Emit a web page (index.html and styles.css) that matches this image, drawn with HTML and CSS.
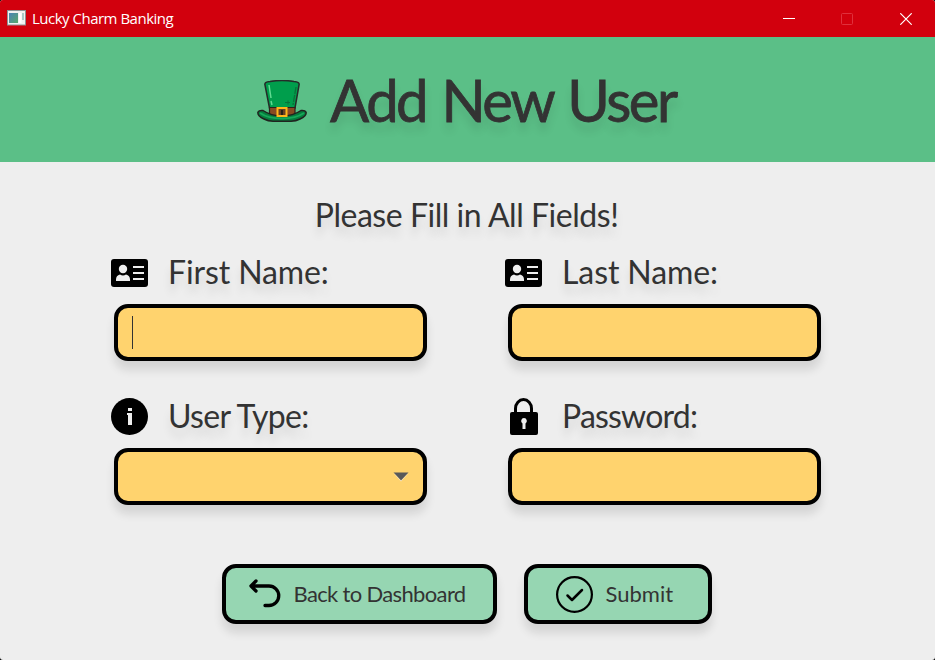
FILE: index.html
```html
<!DOCTYPE html>
<html lang="en">
<head>
<meta charset="utf-8">
<title>Lucky Charm Banking</title>
<link rel="stylesheet" href="styles.css">
</head>
<body>
<div class="window">
  <div class="titlebar">
    <svg class="app-icon" width="19" height="16" viewBox="0 0 19 16">
      <defs><linearGradient id="pane" x1="0" y1="0" x2="1" y2="1"><stop offset="0" stop-color="#4a83b8"/><stop offset="1" stop-color="#58a869"/></linearGradient></defs>
      <rect x=".5" y=".5" width="18" height="14.5" fill="#f1f1f1" stroke="#8c9395"/>
      <rect x="2" y="3" width="9" height="10" fill="url(#pane)"/>
      <rect x="12" y="3" width="2.5" height="10" fill="#fff"/>
      <rect x="15" y="3" width="2" height="7" fill="#a9c9c7"/>
    </svg>
    <span class="app-name">Lucky Charm Banking</span>
    <div class="controls">
      <svg width="12" height="12" viewBox="0 0 12 12"><path d="M0 5.5h12" stroke="#fff"/></svg>
      <svg width="12" height="12" viewBox="0 0 12 12"><rect x=".5" y=".5" width="11" height="11" rx="1" fill="none" stroke="#e0303c"/></svg>
      <svg width="12" height="12" viewBox="0 0 12 12"><path d="M.3.3l11.4 11.4M11.7.3L.3 11.7" stroke="#fff" stroke-width="1.2"/></svg>
    </div>
  </div>
  <header class="banner">
    <svg class="hat" width="50" height="42" viewBox="0 0 50 42">
      <path d="M12.500 28L8 5Q7 2 13 1.500Q25-.5 37 1.500Q43 2 42 5L38 28z" fill="#009e4c" stroke="#252b28" stroke-width="1.500"/>
      <path d="M12 5l2 13M14 21l1 4" stroke="#5fdb91" stroke-width="1.500" fill="none"/>
      <path d="M39 7l-3 18" stroke="#087239" stroke-width="1.300" stroke-dasharray="7 1" fill="none"/>
      <path d="M28 22.500h5M31 20.500v4" stroke="#087239" stroke-width="1" fill="none"/>
      <path d="M12.500 27.500H38V37H12.500z" fill="#874a22" stroke="#2d211b" stroke-width="1.200"/>
      <path d="M1 32Q2 30 6 30.500Q14 36 25 36T44 30.500Q48 30 49 32Q50 36 43 39Q39 41.200 34 41.200H16Q11 41.200 7 39Q0 36 1 32z" fill="#057d3d" stroke="#20231f" stroke-width="1.500"/>
      <path d="M3 33Q11 38.500 25 38.500T47 33" fill="none" stroke="#17a859" stroke-width="1.800"/>
      <path d="M20.500 28h9v8h-9z" fill="#674022" stroke="#ffb51b" stroke-width="2"/>
      <path d="M25 30v5" stroke="#201b18" stroke-width="1.800"/>
    </svg>
    <h1 class="title">Add New User</h1>
  </header>
  <main class="content">
    <h2 class="subtitle">Please Fill in All Fields!</h2>
    <form class="fields">
      <div class="field">
        <div class="label-row">
          <svg class="icon" width="37" height="28" viewBox="0 0 37 28"><rect width="37" height="28" rx="3"/><g fill="#eee"><circle cx="12" cy="10" r="4.200"/><path d="M5 22v-1.500q0-4 4-5 3 2 6 0 4 1 4 5V22zM22 7h11v2H22zM22 13h11v2H22zM22 19h11v2H22z"/></g></svg>
          <label class="label first">First Name:</label>
        </div>
        <div class="input"><span class="caret"></span></div>
      </div>
      <div class="field">
        <div class="label-row">
          <svg class="icon" width="37" height="28" viewBox="0 0 37 28"><rect width="37" height="28" rx="3"/><g fill="#eee"><circle cx="12" cy="10" r="4.200"/><path d="M5 22v-1.500q0-4 4-5 3 2 6 0 4 1 4 5V22zM22 7h11v2H22zM22 13h11v2H22zM22 19h11v2H22z"/></g></svg>
          <label class="label last">Last Name:</label>
        </div>
        <div class="input"></div>
      </div>
      <div class="field">
        <div class="label-row">
          <svg class="icon" width="37" height="37" viewBox="0 0 37 37"><circle cx="18.500" cy="18.500" r="18.500"/><path d="M17 10h4v3h-4zM16 15h5v12h-4V17h-1z" fill="#eee"/></svg>
          <label class="label type">User Type:</label>
        </div>
        <div class="input select"><svg width="16" height="10" viewBox="0 0 16 10"><path d="M1 1.500L8 9.500 15 1.500z" fill="#fff0cf"/><path d="M.5.500h15L8 8.500z" fill="#595959"/></svg></div>
      </div>
      <div class="field">
        <div class="label-row">
          <svg class="icon" width="37" height="37" viewBox="0 0 37 37"><path d="M10.500 16V10.500a8 9 0 0 1 16 0V16" fill="none" stroke="#000" stroke-width="3"/><rect x="5" y="14" width="28" height="23" rx="2"/><path d="M19 20a3 3 0 0 1 1.500 5.500V31h-3v-5.500A3 3 0 0 1 19 20z" fill="#eee"/></svg>
          <label class="label pass">Password:</label>
        </div>
        <div class="input"></div>
      </div>
    </form>
    <div class="actions">
      <button class="button back" type="button">
        <svg width="34" height="30" viewBox="0 0 34 30"><path d="M8 2L3 7l5 5M3.500 7H21a9.500 9.500 0 0 1 0 19.500H17" fill="none" stroke="#000" stroke-width="3.300" stroke-linecap="round" stroke-linejoin="round"/></svg>
        <span class="back-text">Back to Dashboard</span>
      </button>
      <button class="button submit" type="button">
        <svg width="37" height="37" viewBox="0 0 37 37"><circle cx="18.500" cy="18.500" r="17.400" fill="none" stroke="#000" stroke-width="2.200"/><path d="M11.500 19.500l4.500 4.500L26 14" fill="none" stroke="#000" stroke-width="2.500" stroke-linecap="round" stroke-linejoin="round"/></svg>
        <span class="submit-text">Submit</span>
      </button>
    </div>
  </main>
</div>
</body>
</html>
```
FILE: styles.css
```css
* { box-sizing: border-box; }
body { margin: 0; background: #000; font-family: Lato, sans-serif; color: #333; }
.window { width: 935px; height: 660px; overflow: hidden; background: #eee; border-radius: 3px; }
.titlebar { height: 37px; background: #d2000d; display: flex; align-items: center; padding: 0 23px 2px 7px; }
.app-name { margin-left: 6px; color: #fff; font: 15px/20px "Open Sans", sans-serif; letter-spacing: -.5px; }
.controls { display: flex; gap: 47px; margin: 2px 0 0 auto; }
.controls svg:first-child { margin-right: -1px; }
.banner { height: 125px; background: #5bbf87; display: flex; align-items: center; padding-left: 257px; }
.hat { margin-top: 3px; }
.title, .subtitle, .label { margin: 0; font-weight: 400; white-space: nowrap; text-shadow: 0 9px 8px rgba(0,0,0,.1); }
.title { margin-left: 23px; font-size: 58px; line-height: 70px; letter-spacing: -2.5px; word-spacing: 3px; -webkit-text-stroke: .8px #333; }
.content { padding-top: 32px; }
.subtitle { font-size: 32px; line-height: 42px; text-align: center; letter-spacing: -.46px; margin-right: 2px; }
.fields { display: grid; grid-template-columns: 313px 313px; column-gap: 81px; justify-content: center; }
.field { height: 144px; }
.label-row { height: 68px; display: flex; align-items: center; margin-left: -3px; gap: 20px; padding-top: 3px; }
.icon { margin-top: 2px; }
.label { font-size: 32px; line-height: 40px; letter-spacing: -.1px; }
.type { letter-spacing: -.65px; }
.pass { letter-spacing: -.8px; }
.input { height: 57px; display: flex; align-items: center; border: 4px solid #000; border-radius: 14px; background: #ffd36e; box-shadow: 0 9px 10px rgba(0,0,0,.11); }
.caret { width: 1px; height: 33px; background: #333; margin-left: 14px; }
.select { justify-content: flex-end; padding-right: 14px; }
.actions { display: flex; justify-content: center; gap: 27px; margin: 40px 2px 0 0; }
.button { height: 60px; border: 4px solid #000; border-radius: 14px; background: #96d6b2; box-shadow: 0 9px 10px rgba(0,0,0,.11); color: #333; font: 22px/30px Lato, sans-serif; display: flex; align-items: center; white-space: nowrap; }
.back { width: 275px; padding: 0 0 0 22px; gap: 12px; }
.back-text { letter-spacing: -.65px; }
.submit { width: 188px; padding: 0 0 0 28px; gap: 13px; }
```
